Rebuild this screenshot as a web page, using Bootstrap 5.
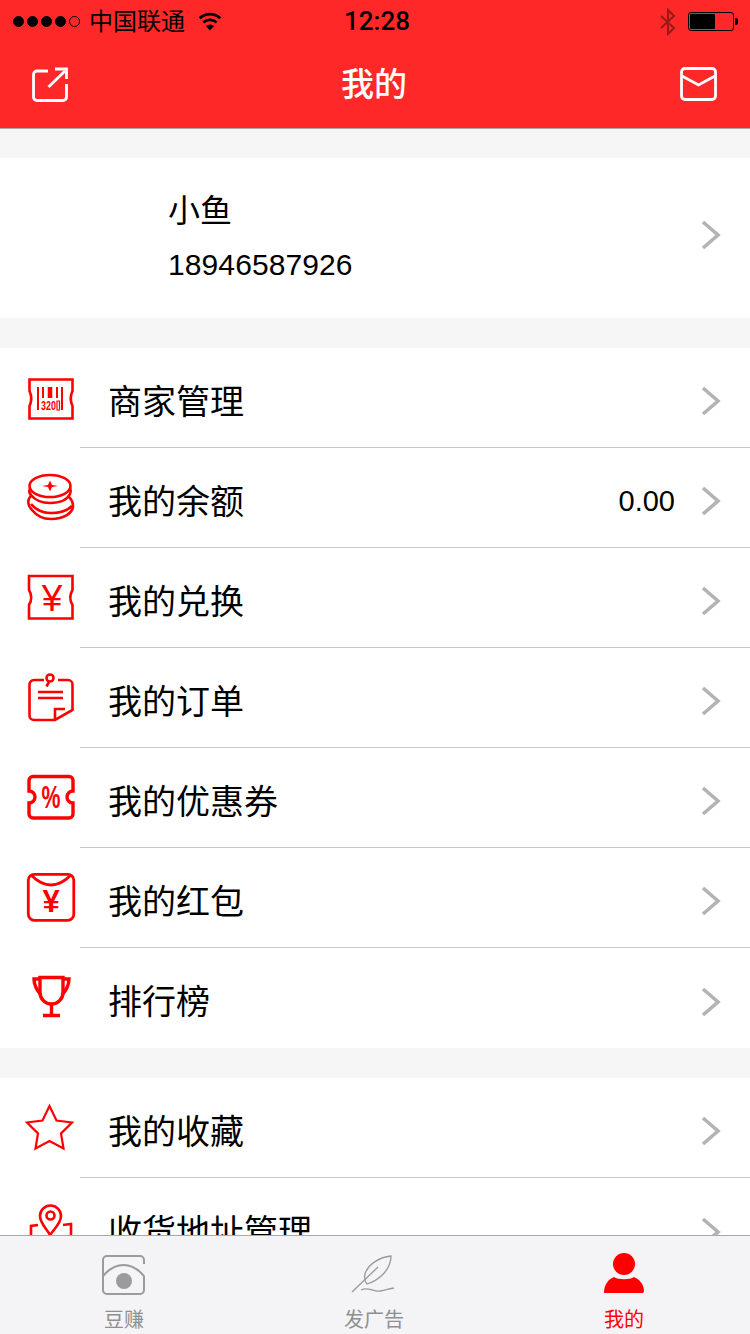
<!DOCTYPE html>
<html lang="zh-CN">
<head>
    <meta charset="UTF-8">
    <meta name="viewport" content="width=device-width, initial-scale=1.0">
    <title>我的</title>
    <link href="https://cdn.jsdelivr.net/npm/bootstrap@5.3.0/dist/css/bootstrap.min.css" rel="stylesheet">
    <style>
        html, body { height: 100%; }
        body {
            font-family: "Liberation Sans", "Noto Sans CJK SC", sans-serif;
            background-color: #f6f6f6;
            color: #000;
            overflow: hidden;
        }
        .app-shell { height: 1334px; }
        .top-red { background-color: #ff2828; border-bottom: 1px solid #a8a8a8; height: 129px; }
        .status-row { height: 40px; padding: 3px 12px 0 13px; font-size: 24px; line-height: 36px; }
        .status-side { flex: 1 1 0; min-width: 0; }
        .sig-dots { gap: 3px; }
        .sig-dot { width: 11px; height: 11px; border-radius: 50%; background: #000; border: 1px solid #000; }
        .sig-dot.is-empty { background: transparent; }
        .carrier-name { margin-left: 9px; margin-right: 13px; }
        .clock-text { font-family: Roboto, "Liberation Sans", sans-serif; font-weight: 500; font-size: 26px; margin-left: 3px; margin-top: -2px; }
        .batt-box { width: 46px; height: 19px; border: 1px solid #000; border-radius: 3px; padding: 1px; margin-left: 12px; }
        .batt-level { width: 25px; height: 100%; background: #000; border-radius: 1px; }
        .batt-nub { width: 3px; height: 7px; background: #000; border-radius: 0 2px 2px 0; margin-left: 1px; }
        .nav-row { height: 88px; padding: 0 33px 0 32px; color: #fff; }
        .nav-title { font-size: 33px; font-weight: 500; padding-top: 2px; }
        .main-scroll { min-height: 0; padding-top: 29px; }
        .group-box { background: #fff; margin-bottom: 30px; }
        .profile-row { height: 160px; padding-left: 168px; padding-right: 28px; }
        .profile-row .chev { margin-bottom: 6px; }
        .profile-name { font-size: 32px; line-height: 40px; margin-bottom: 15px; }
        .profile-phone { font-size: 30px; line-height: 40px; letter-spacing: .1px; margin-top: -1px; }
        .menu-item { height: 100px; padding: 0; border: 0; background: #fff; color: #000; }
        .menu-ico { width: 60px; height: 60px; margin-left: 20px; flex: none; fill: none; stroke: #f00; stroke-width: 2.6; }
        .menu-ico text { fill: #f00; stroke: none; font-family: "Liberation Sans", sans-serif; text-anchor: middle; }
        .menu-ico.ico-bold { stroke-width: 3.4; }
        .menu-ico.ico-mid { stroke-width: 2.8; }
        .menu-ico.ico-thin { stroke-width: 2.2; }
        .menu-body { border-bottom: 1px solid #c8c8c8; padding-left: 29px; padding-right: 28px; }
        .menu-item:last-child .menu-body { border-bottom: 0; }
        .menu-label { font-size: 34px; line-height: 40px; padding-top: 8px; margin-left: -1px; }
        .menu-value { font-size: 29px; margin-right: 25px; padding-top: 8px; }
        .menu-body .chev { margin-top: 7px; }
        .chev { width: 22px; height: 30px; flex: none; fill: none; stroke: #b3b3b3; stroke-width: 3.6; }
        .tab-strip { height: 99px; flex: none; background: #f4f4f6; border-top: 1px solid #a9a9a9; padding-top: 17px; overflow: hidden; }
        .tab-cell { color: #8f8f8f; font-size: 20px; line-height: 28px; padding-right: 2px; }
        .tab-cell svg { display: block; margin: 0 auto 9px; }
        .tab-cell.is-active { color: #f00; }
    </style>
</head>
<body>
    <div class="app-shell d-flex flex-column">
        <!-- 顶部 -->
        <header class="top-red flex-shrink-0">
            <div class="status-row d-flex align-items-center">
                <div class="status-side d-flex align-items-center">
                    <div class="sig-dots d-flex">
                        <span class="sig-dot"></span><span class="sig-dot"></span><span class="sig-dot"></span><span class="sig-dot"></span><span class="sig-dot is-empty"></span>
                    </div>
                    <span class="carrier-name">中国联通</span>
                    <svg width="24" height="19" viewBox="0 0 24 19"><path d="M12 18.500 8 14a6 6 0 0 1 8 0Z" fill="#000"/><path d="M5.400 10.500a9.600 9.600 0 0 1 13.200 0M1.600 6.300a15 15 0 0 1 20.800 0" fill="none" stroke="#000" stroke-width="2.600"/></svg>
                </div>
                <span class="clock-text">12:28</span>
                <div class="status-side d-flex align-items-center justify-content-end">
                    <svg width="16" height="28" viewBox="0 0 16 28"><path d="M1 8 14 20 8 26V2l6 6L1 20" fill="none" stroke="#000" stroke-opacity=".4" stroke-width="2"/></svg>
                    <div class="batt-box"><div class="batt-level"></div></div>
                    <div class="batt-nub"></div>
                </div>
            </div>
            <div class="nav-row d-flex align-items-center justify-content-between">
                <svg width="36" height="36" viewBox="0 0 36 36" fill="none" stroke="#fff" stroke-width="2.800"><path d="M16 5H5a3.500 3.500 0 0 0-3.500 3.500V31a3.500 3.500 0 0 0 3.500 3.500H31a3.500 3.500 0 0 0 3.500-3.500V18"/><path d="M16.500 21 33 5"/><path d="M23 3H34.500V13"/></svg>
                <span class="nav-title">我的</span>
                <svg width="37" height="34" viewBox="0 0 37 34" fill="none" stroke="#fff" stroke-width="2.800"><rect x="1.500" y="1.500" width="34" height="31" rx="3.500"/><path d="M2 9 18.500 18 35 9"/></svg>
            </div>
        </header>

        <main class="main-scroll flex-grow-1 overflow-hidden">
            <!-- 用户信息 -->
            <div class="group-box profile-row d-flex align-items-center justify-content-between">
                <div>
                    <div class="profile-name">小鱼</div>
                    <div class="profile-phone">18946587926</div>
                </div>
                <svg class="chev" viewBox="0 0 22 30"><path d="M3 2 18 15 3 28"/></svg>
            </div>

            <!-- 菜单一 -->
            <div class="group-box list-group list-group-flush rounded-0">
                <div class="list-group-item menu-item d-flex">
                    <svg class="menu-ico align-self-center" viewBox="0 0 60 60"><path d="M9.500 11.500H52.500V23Q49 30.500 52.500 38V50.500H9.500V38Q13 30.500 9.500 23Z"/><path d="M18 19V42M23 19V30M37 19V30M42 19V42" stroke-width="2"/><path d="M30 19V30" stroke-width="4.500"/><text x="28.500" y="42" font-size="12" font-weight="700" textLength="15" lengthAdjust="spacingAndGlyphs">320</text><path d="M37 33H39.500V42H37Z" stroke-width="1.200"/></svg>
                    <div class="menu-body flex-grow-1 d-flex align-items-center">
                        <span class="menu-label flex-grow-1">商家管理</span>
                        <svg class="chev" viewBox="0 0 22 30"><path d="M3 2 18 15 3 28"/></svg>
                    </div>
                </div>
                <div class="list-group-item menu-item d-flex">
                    <svg class="menu-ico align-self-center" viewBox="0 0 60 60"><ellipse cx="30" cy="18" rx="20.500" ry="11"/><path d="M30 12.500 32 17 38 18 32 19 30 23.500 28 19 22 18 28 17Z" fill="#f00" stroke="none"/><path d="M10 21C9 23 9 25 11 27 15 32 22 35 30 35 39 35 47 32 50 26 51 24 51 22 50 20"/><path d="M12 27C7 31 7 37 12 42 16 47 23 51 31 51 44 51 53 45 53 38 53 34 51 31 49 29"/><path d="M11 36C16 42 24 45 31 45 39 45 47 43 52 38"/></svg>
                    <div class="menu-body flex-grow-1 d-flex align-items-center">
                        <span class="menu-label flex-grow-1">我的余额</span>
                        <span class="menu-value">0.00</span>
                        <svg class="chev" viewBox="0 0 22 30"><path d="M3 2 18 15 3 28"/></svg>
                    </div>
                </div>
                <div class="list-group-item menu-item d-flex">
                    <svg class="menu-ico align-self-center" viewBox="0 0 60 60"><path d="M9 8H52.500V22Q48 29.500 52.500 37V50.500H9V37Q13.500 29.500 9 22Z"/><text x="32" y="43" font-size="37">¥</text></svg>
                    <div class="menu-body flex-grow-1 d-flex align-items-center">
                        <span class="menu-label flex-grow-1">我的兑换</span>
                        <svg class="chev" viewBox="0 0 22 30"><path d="M3 2 18 15 3 28"/></svg>
                    </div>
                </div>
                <div class="list-group-item menu-item d-flex">
                    <svg class="menu-ico align-self-center" viewBox="0 0 60 60"><path d="M24 12H14a4.500 4.500 0 0 0-4.500 4.500V47.500A4.500 4.500 0 0 0 14 52H35L52.500 42V16.500A4.500 4.500 0 0 0 48 12H38"/><path d="M35 52V41H45"/><circle cx="30" cy="10" r="3.500"/><path d="M29 14 26.500 18.500"/><path d="M18 24H43M18 30H43"/></svg>
                    <div class="menu-body flex-grow-1 d-flex align-items-center">
                        <span class="menu-label flex-grow-1">我的订单</span>
                        <svg class="chev" viewBox="0 0 22 30"><path d="M3 2 18 15 3 28"/></svg>
                    </div>
                </div>
                <div class="list-group-item menu-item d-flex">
                    <svg class="menu-ico ico-bold align-self-center" viewBox="0 0 60 60"><path d="M13 8.500H49A4 4 0 0 1 53 12.500V23A6 6 0 0 0 53 35V46A4 4 0 0 1 49 50H13A4 4 0 0 1 9 46V35A6 6 0 0 0 9 23V12.500A4 4 0 0 1 13 8.500Z"/><text x="31" y="40" font-size="31" font-weight="700" textLength="19" lengthAdjust="spacingAndGlyphs">%</text></svg>
                    <div class="menu-body flex-grow-1 d-flex align-items-center">
                        <span class="menu-label flex-grow-1">我的优惠券</span>
                        <svg class="chev" viewBox="0 0 22 30"><path d="M3 2 18 15 3 28"/></svg>
                    </div>
                </div>
                <div class="list-group-item menu-item d-flex">
                    <svg class="menu-ico ico-mid align-self-center" viewBox="0 0 60 60"><rect x="8.300" y="6.300" width="45.500" height="46" rx="6"/><path d="M11 7Q31 27 51 7"/><text x="31" y="44" font-size="31" font-weight="700">¥</text></svg>
                    <div class="menu-body flex-grow-1 d-flex align-items-center">
                        <span class="menu-label flex-grow-1">我的红包</span>
                        <svg class="chev" viewBox="0 0 22 30"><path d="M3 2 18 15 3 28"/></svg>
                    </div>
                </div>
                <div class="list-group-item menu-item d-flex">
                    <svg class="menu-ico ico-bold align-self-center" viewBox="0 0 60 60"><path d="M20 9.500H43V24.500A11.500 11.500 0 0 1 20 24.500Z"/><path d="M20 11H14Q14 19 21 27M43 11H49Q49 19 42 27"/><path d="M31.500 36V47M23 47.500H40"/></svg>
                    <div class="menu-body flex-grow-1 d-flex align-items-center">
                        <span class="menu-label flex-grow-1">排行榜</span>
                        <svg class="chev" viewBox="0 0 22 30"><path d="M3 2 18 15 3 28"/></svg>
                    </div>
                </div>
            </div>

            <!-- 菜单二 -->
            <div class="group-box list-group list-group-flush rounded-0">
                <div class="list-group-item menu-item d-flex">
                    <svg class="menu-ico ico-thin align-self-center" viewBox="0 0 60 60"><path d="M29.500 8 36.500 22.500 52 24.500 41 35.500 43.500 50.500 29.500 43 15.500 50.500 18 35.500 7 24.500 22.500 22.500Z"/></svg>
                    <div class="menu-body flex-grow-1 d-flex align-items-center">
                        <span class="menu-label flex-grow-1">我的收藏</span>
                        <svg class="chev" viewBox="0 0 22 30"><path d="M3 2 18 15 3 28"/></svg>
                    </div>
                </div>
                <div class="list-group-item menu-item d-flex">
                    <svg class="menu-ico align-self-center" viewBox="0 0 60 60"><path d="M30 37C26 30 20 25 20 18A10.500 10.500 0 0 1 41 18C41 25 35 30 30 37Z"/><circle cx="30.500" cy="17.500" r="4"/><path d="M18 27 11 28V50M43 27 51 26V50"/></svg>
                    <div class="menu-body flex-grow-1 d-flex align-items-center">
                        <span class="menu-label flex-grow-1">收货地址管理</span>
                        <svg class="chev" viewBox="0 0 22 30"><path d="M3 2 18 15 3 28"/></svg>
                    </div>
                </div>
            </div>
        </main>

        <!-- 底部标签栏 -->
        <nav class="tab-strip row g-0 text-center">
            <div class="col-4 tab-cell">
                <svg width="60" height="44" viewBox="0 0 60 44" fill="none" stroke="#9b9b9b" stroke-width="2"><path d="M50 11V7A4 4 0 0 0 46 3H13A4 4 0 0 0 9 7V37A4 4 0 0 0 13 41H46A4 4 0 0 0 50 37V23"/><path d="M9 23C15 16 22 12 29.500 12S44 16 50 23"/><circle cx="30" cy="28" r="8" fill="#9b9b9b" stroke="none"/></svg>
                豆赚
            </div>
            <div class="col-4 tab-cell">
                <svg width="60" height="44" viewBox="0 0 60 44" fill="none" stroke="#999" stroke-width="1.300"><path d="M47 3C36 4 24 11 21 21 20 26 21 29 23 31 33 28 47 18 47 3Z"/><path d="M8 39 34 14"/><path d="M17 37C24 33 29 39 36 38 41 37 44 36 50 35"/></svg>
                发广告
            </div>
            <div class="col-4 tab-cell is-active">
                <svg width="60" height="44" viewBox="0 0 60 44" fill="#f00"><circle cx="30" cy="11" r="11"/><path d="M10 40C10 31 15 26 20 24 24 27 36 27 40 24 45 26 50 31 50 38 50 39.500 49 40 48 40Z"/></svg>
                我的
            </div>
        </nav>
    </div>
    <script src="https://cdn.jsdelivr.net/npm/bootstrap@5.3.0/dist/js/bootstrap.bundle.min.js"></script>
</body>
</html>
